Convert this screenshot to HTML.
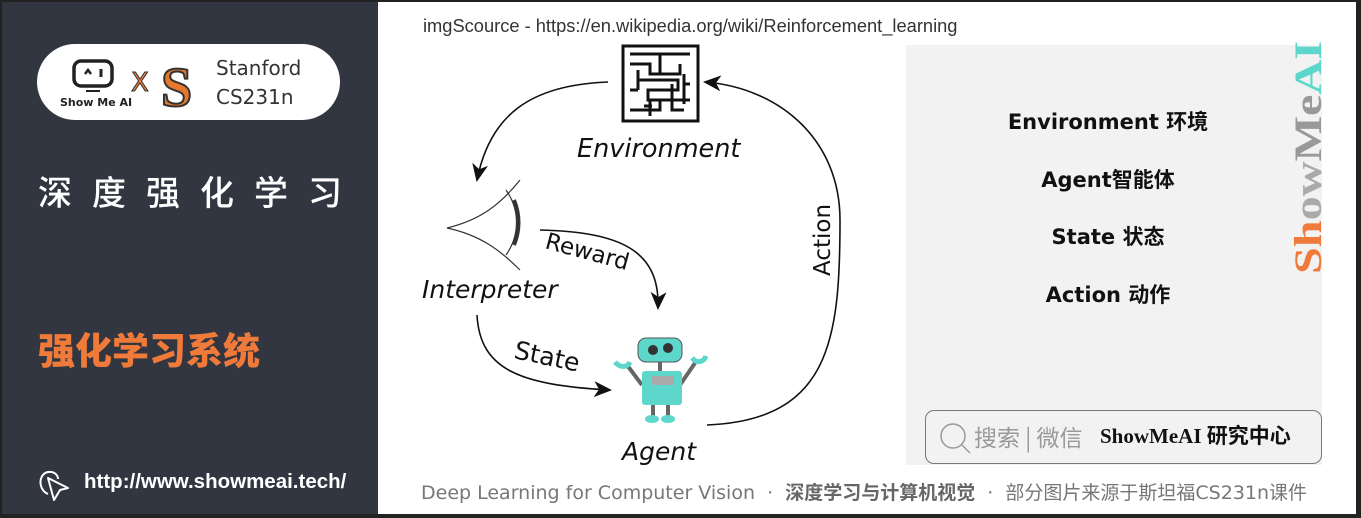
<!DOCTYPE html>
<html><head><meta charset="utf-8"><style>
*{margin:0;padding:0;box-sizing:border-box}
body{width:1361px;height:518px;overflow:hidden;background:#fff;position:relative;font-family:"Liberation Sans","Noto Sans CJK SC",sans-serif}
.left{position:absolute;left:0;top:0;width:378px;height:518px;background:#323640}
.pill{position:absolute;left:37px;top:44px;width:303px;height:76px;background:#fff;border-radius:38px}
.t1{position:absolute;left:38px;top:166px;color:#fff;font-size:34px;letter-spacing:20px;font-family:"Noto Sans CJK SC",sans-serif;font-weight:500}
.t2{position:absolute;left:38px;top:323px;color:#f07a3a;font-size:37px;font-weight:900;font-family:"Noto Sans CJK SC",sans-serif;line-height:50px}
.url{position:absolute;left:84px;top:470px;color:#fff;font-size:20.5px;font-weight:bold}
.src{position:absolute;left:423px;top:15px;font-size:18.3px;color:#333}
.gray{position:absolute;left:906px;top:45px;width:416px;height:420px;background:#f2f2f2}
.item{position:absolute;left:906px;width:404px;text-align:center;font-size:21px;color:#111;font-family:"DejaVu Sans","Noto Sans CJK SC",sans-serif;font-weight:bold}
.search{position:absolute;left:925px;top:410px;width:397px;height:54px;border:1.5px solid #777;border-radius:9px;background:#f2f2f2}
.foot{position:absolute;left:421px;top:478px;font-size:19px;color:#777;white-space:nowrap;font-family:"DejaVu Sans","Noto Sans CJK SC",sans-serif}
</style></head><body>
<div class="left">
 <div class="pill">
  <svg width="303" height="76" style="position:absolute;left:0;top:0">
   <rect x="37" y="17" width="38" height="25" rx="7" fill="none" stroke="#222" stroke-width="3.5"/>
   <path d="M48 30 l3-4 3 4" fill="none" stroke="#222" stroke-width="2.5"/>
   <path d="M64 25 v8" stroke="#222" stroke-width="3"/>
   <path d="M49 47 h14" stroke="#222" stroke-width="2"/>
   <text x="23" y="62" font-size="11" font-weight="bold" font-family="DejaVu Sans" fill="#222">Show Me AI</text>
   <text x="94" y="47" font-size="26" font-family="DejaVu Sans" fill="#f07a3a" stroke="#333" stroke-width="1">X</text>
   <text x="124" y="62" font-size="56" font-weight="bold" font-family="Liberation Serif" fill="#e8772e" stroke="#333" stroke-width="2">S</text>
   <text x="179" y="31" font-size="20" font-family="DejaVu Sans" fill="#333">Stanford</text>
   <text x="179" y="60" font-size="20" font-family="DejaVu Sans" fill="#333">CS231n</text>
  </svg>
 </div>
 <div class="t1">深度强化学习</div>
 <div class="t2">强化学习系统</div>
 <svg width="40" height="40" style="position:absolute;left:34px;top:466px"><path d="M14 28 C4 24 4 8 14 6 C20 5 24 9 24 13" fill="none" stroke="#fff" stroke-width="2"/><path d="M14 12 L34 22 L26 24 L20 34 Z" fill="none" stroke="#fff" stroke-width="2" stroke-linejoin="round"/></svg>
 <div class="url">http://www.showmeai.tech/</div>
</div>
<div class="src">imgScource - https://en.wikipedia.org/wiki/Reinforcement_learning</div>
<svg width="490" height="430" style="position:absolute;left:410px;top:40px" font-family="DejaVu Sans">
 <defs>
 <marker id="b" markerWidth="18" markerHeight="16" refX="16" refY="8" orient="auto" markerUnits="userSpaceOnUse"><path d="M0 0 L18 8 L0 16 L5 8Z" fill="#111"/></marker></defs>
 <rect x="213" y="6" width="75" height="75" fill="#fff" stroke="#111" stroke-width="3"/>
 <path d="M220 14h60M220 24h20v10h20M250 14v20h20v-10M228 40h40v10h-30v10h20M220 70h30v-10h30M240 60v16M262 44v26h12M228 30v20M274 34v30M220 50h8M280 44h-6M234 66h8" fill="none" stroke="#111" stroke-width="3"/>
 <text x="167" y="117" font-size="25.5" font-style="italic" fill="#111">Environment</text>
 <path d="M198 42 C120 45 80 75 67 140" fill="none" stroke="#111" stroke-width="1.6" marker-end="url(#b)"/>
 <path d="M297 385 C420 380 430 300 430 180 C430 100 370 48 295 42" fill="none" stroke="#111" stroke-width="1.6" marker-end="url(#b)"/>
 <text transform="translate(420 236) rotate(-90)" font-size="23" fill="#111">Action</text>
 <path d="M37 188 C70 180 90 165 110 140 M37 188 C70 195 90 210 110 230" fill="none" stroke="#333" stroke-width="1.2"/>
 <path d="M96 150 C110 170 110 195 96 215" fill="none" stroke="#333" stroke-width="1.2"/>
 <path d="M104 160 C110 175 110 190 104 205" fill="none" stroke="#333" stroke-width="4"/>
 <text x="12" y="258" font-size="25" font-style="italic" fill="#111">Interpreter</text>
 <path d="M130 190 C210 192 250 210 248 268" fill="none" stroke="#111" stroke-width="1.6" marker-end="url(#b)"/>
 <text transform="translate(134 208) rotate(15)" font-size="23" fill="#111">Reward</text>
 <path d="M67 275 C70 330 110 345 200 350" fill="none" stroke="#111" stroke-width="1.6" marker-end="url(#b)"/>
 <text transform="translate(103 318) rotate(12)" font-size="25" fill="#111">State</text>
 <g>
  <rect x="228" y="298" width="44" height="24" rx="8" fill="#5dd6cc" stroke="#555"/>
  <circle cx="243" cy="310" r="6" fill="#333" stroke="#5dd6cc" stroke-width="2"/><circle cx="258" cy="308" r="6" fill="#333" stroke="#5dd6cc" stroke-width="2"/>
  <path d="M250 322v10M232 345l-15-20M270 345l15-22" stroke="#666" stroke-width="4" fill="none"/>
  <path d="M205 322c5 6 12 6 15 0M282 318c5 6 12 4 14-2" stroke="#5dd6cc" stroke-width="5" fill="none"/>
  <rect x="232" y="331" width="40" height="34" rx="3" fill="#5dd6cc"/>
  <rect x="242" y="336" width="22" height="9" fill="#aaa"/>
  <path d="M243 365v12M258 365v12" stroke="#666" stroke-width="4"/>
  <ellipse cx="242" cy="379" rx="7" ry="4" fill="#5dd6cc"/><ellipse cx="258" cy="379" rx="7" ry="4" fill="#5dd6cc"/>
 </g>
 <text x="212" y="420" font-size="25" font-style="italic" fill="#111">Agent</text>
</svg>
<div class="gray"></div>
<div class="item" style="top:106px">Environment 环境</div>
<div class="item" style="top:164px">Agent智能体</div>
<div class="item" style="top:221px">State 状态</div>
<div class="item" style="top:279px">Action 动作</div>
<svg width="40" height="240" style="position:absolute;left:1288px;top:38px"><text transform="translate(33 236) rotate(-90)" font-size="39" font-weight="bold" font-family="Liberation Serif" textLength="233" lengthAdjust="spacingAndGlyphs"><tspan fill="#f07a3a">Sh</tspan><tspan fill="#aaa">ow</tspan><tspan fill="#999">Me</tspan><tspan fill="#5dd6cc">AI</tspan></text></svg>
<div class="search">
 <svg width="40" height="40" style="position:absolute;left:10px;top:8px"><circle cx="17" cy="17" r="12" fill="none" stroke="#999" stroke-width="1.5"/><path d="M26 26l8 8" stroke="#999" stroke-width="1.5"/></svg>
 <span style="position:absolute;left:48px;top:12px;font-size:23px;color:#999;font-family:'Noto Sans CJK SC',sans-serif;line-height:26px">搜索 | 微信</span>
 <span style="position:absolute;left:174px;top:12px;font-size:21px;color:#111;font-weight:bold;font-family:'Liberation Serif','Noto Sans CJK SC',serif;line-height:26px">ShowMeAI 研究中心</span>
</div>
<div class="foot">Deep Learning for Computer Vision &nbsp;·&nbsp; <b style="color:#666">深度学习与计算机视觉</b> &nbsp;·&nbsp; 部分图片来源于斯坦福CS231n课件</div>
<div style="position:absolute;left:1356px;top:0;width:5px;height:518px;background:#222"></div>
<div style="position:absolute;left:0;top:514px;width:1361px;height:4px;background:#222"></div>
<div style="position:absolute;left:0;top:0;width:1361px;height:2px;background:#222"></div>
<div style="position:absolute;left:0;top:0;width:2px;height:518px;background:#222"></div>
</body></html>
